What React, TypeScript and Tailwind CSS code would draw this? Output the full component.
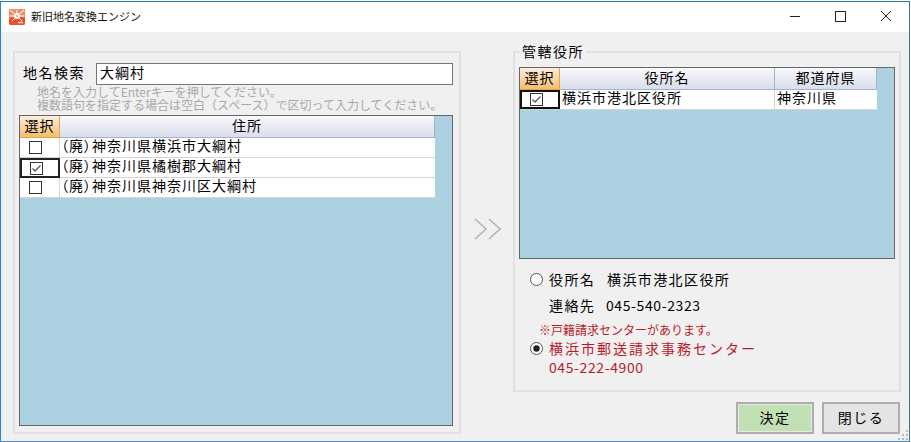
const font = { fontFamily: '"Noto Sans CJK JP", "Liberation Sans", sans-serif' };

const Check = ({ checked = false }: { checked?: boolean }) => (
  <svg width="13" height="13" viewBox="0 0 13 13" className="block">
    <rect x="0.5" y="0.5" width="12" height="12" fill="#fff" stroke="#333" />
    {checked && <path d="M2.5 6.5 L5 9 L10.5 3.5" fill="none" stroke="#555" strokeWidth="1.3" />}
  </svg>
);

const Radio = ({ checked = false }: { checked?: boolean }) => (
  <svg width="13" height="13" viewBox="0 0 13 13" className="block shrink-0">
    <circle cx="6.5" cy="6.5" r="6" fill="#fff" stroke="#555" />
    {checked && <circle cx="6.5" cy="6.5" r="3.2" fill="#222" />}
  </svg>
);

const HeadCell = ({ className, children }: { className: string; children: React.ReactNode }) => (
  <div
    className={`flex h-[22px] items-center justify-center border-r border-b border-[#a0b4cc] bg-gradient-to-b from-[#f8f9fc] to-[#d9deea] pb-[2px] text-[14px] tracking-[1px] text-black ${className}`}
  >
    {children}
  </div>
);

const SelectHead = () => (
  <div className="flex h-[22px] w-[40px] items-center justify-center border-r border-b border-[#f0a040] bg-gradient-to-b from-[#fbeedd] to-[#f3bd6c] pb-[2px] text-[14px] tracking-[1px] text-black">
    選択
  </div>
);

const AddressRow = ({ text, checked = false, selected = false }: { text: string; checked?: boolean; selected?: boolean }) => (
  <div className="flex h-[20px] border-b border-[#d4d4d4] bg-white">
    <div
      className={`flex w-[40px] items-center justify-center pr-[8px] ${selected ? "-mb-px border-2 border-[#222]" : "border-r border-[#d4d4d4]"}`}
    >
      <Check checked={checked} />
    </div>
    <div className="flex-1 pl-[1px] text-[14px] leading-[15px] tracking-[1px] text-black [font-feature-settings:'palt']">{text}</div>
  </div>
);

const WindowButtons = () => (
  <div className="flex items-center">
    <svg width="46" height="30" viewBox="0 0 46 30" className="block">
      <path d="M19 14.5 H29" stroke="#222" />
    </svg>
    <svg width="46" height="30" viewBox="0 0 46 30" className="block">
      <rect x="18.5" y="9.5" width="10" height="10" fill="none" stroke="#222" />
    </svg>
    <svg width="46" height="30" viewBox="0 0 46 30" className="block">
      <path d="M18 9 L28 19 M28 9 L18 19" stroke="#222" />
    </svg>
  </div>
);

const AppIcon = () => (
  <svg width="16" height="16" viewBox="0 0 16 16" className="block">
    <rect width="16" height="16" rx="1.5" fill="#e9502c" />
    <path d="M0 0 L16 0 L16 9 L8 7 L0 9 Z" fill="#f58a68" />
    <path d="M8 7 L1 1 M8 7 L15 1 M8 7 V1 M8 7 H1 M8 7 H15 M8 7 L3 12 M8 7 L13 12" stroke="#fff" strokeWidth="1" />
    <circle cx="8" cy="7" r="3" fill="#fff" />
    <circle cx="8" cy="7" r="1" fill="#f0a080" />
    <path d="M9 13.5 H14" stroke="#fbd5c8" strokeWidth="1.5" />
  </svg>
);

const ResizeGrip = () => (
  <svg width="12" height="12" viewBox="0 0 12 12" className="absolute right-0 bottom-0 block">
    <path d="M9 1h2v2H9z M5 5h2v2H5z M9 5h2v2H9z M1 9h2v2H1z M5 9h2v2H5z M9 9h2v2H9z" fill="#b8b8b8" />
  </svg>
);

export default function App() {
  return (
    <div style={font} className="h-[442px] w-[911px] bg-white pt-px pr-px">
      <div className="relative flex h-[441px] w-[910px] flex-col overflow-hidden border border-t-[#2f78b8] border-r-[#2f78b8] border-b-[#4a86c0] border-l-[#2a82d8] bg-[#f0f0f0]">
        <div className="flex h-[30px] shrink-0 items-center justify-between bg-white">
          <div className="flex items-center gap-[6px] pl-[8px]">
            <AppIcon />
            <span className="pb-[1px] text-[11px] text-[#111]">新旧地名変換エンジン</span>
          </div>
          <WindowButtons />
        </div>

        <div className="flex flex-1 pt-[19px] pl-[12px]">
          {/* left panel */}
          <div className="flex h-[383px] w-[448px] flex-col border-2 border-[#e0e0e0] pt-[9px] pr-[6px] pb-[6px] pl-[4px]">
            <div className="flex h-[23px] items-center">
              <span className="w-[77px] pb-[2px] pl-[4px] text-[14px] tracking-[1.5px] text-black">地名検索</span>
              <div className="flex h-[22px] flex-1 items-center border border-[#767676] bg-white pb-[2px] pl-[3px] text-[14px] tracking-[1px] text-black">
                大綱村
              </div>
            </div>
            <div className="pl-[18px] text-[12px] leading-[13px] whitespace-nowrap text-[#a8a8a8]">
              <div>地名を入力してEnterキーを押してください。</div>
              <div>複数語句を指定する場合は空白（スペース）で区切って入力してください。</div>
            </div>
            <div className="mt-[4px] flex-1 border border-[#666] bg-[#acd2e1]">
              <div className="w-[415px]">
                <div className="flex">
                  <SelectHead />
                  <HeadCell className="flex-1">住所</HeadCell>
                </div>
                <AddressRow text="（廃）神奈川県横浜市大綱村" />
                <AddressRow text="（廃）神奈川県橘樹郡大綱村" checked selected />
                <AddressRow text="（廃）神奈川県神奈川区大綱村" />
              </div>
            </div>
          </div>

          {/* arrows */}
          <div className="flex w-[52px] items-start justify-center pt-[167px]">
            <svg width="27" height="22" viewBox="0 0 27 22" className="block">
              <path d="M1 1 L12 11 L1 21 M15 1 L26 11 L15 21" fill="none" stroke="#b4b4b4" strokeWidth="1.6" />
            </svg>
          </div>

          {/* right column */}
          <div className="flex w-[388px] flex-col">
            <div className="relative flex h-[341px] flex-col border-2 border-[#e0e0e0] px-[4px] pt-[14px]">
              <span className="absolute -top-[10px] left-[5px] bg-[#f0f0f0] px-[2px] text-[14px] leading-[16px] tracking-[1.5px] text-black">
                管轄役所
              </span>
              <div className="h-[192px] shrink-0 border border-[#666] bg-[#acd2e1]">
                <div className="w-[357px]">
                  <div className="flex">
                    <SelectHead />
                    <HeadCell className="w-[215px]">役所名</HeadCell>
                    <HeadCell className="flex-1">都道府県</HeadCell>
                  </div>
                  <div className="flex h-[20px] border-b border-[#d4d4d4] bg-white text-[14px] leading-[15px] text-black">
                    <div className="flex w-[40px] items-center justify-center border-2 border-[#111] pr-[8px]">
                      <Check checked />
                    </div>
                    <div className="w-[215px] border-r border-[#d4d4d4] pl-[2px] tracking-[1px]">横浜市港北区役所</div>
                    <div className="flex-1 pl-[2px] tracking-[1px]">神奈川県</div>
                  </div>
                </div>
              </div>
              <div className="flex items-center gap-[6px] pt-[10px] pl-[11px] text-[14px] leading-[20px] tracking-[1.4px] text-black">
                <Radio />
                <span className="w-[52px]">役所名</span>
                <span>横浜市港北区役所</span>
              </div>
              <div className="pt-[6px] pl-[30px] text-[14px] leading-[20px] tracking-[1.4px] text-black">
                <span className="inline-block w-[57px]">連絡先</span>
                <span className="tracking-[0.6px]">045-540-2323</span>
              </div>
              <div className="pt-[7px] pl-[20px] text-[12px] leading-[15px] text-[#b81c2c]">※戸籍請求センターがあります。</div>
              <div className="flex items-center gap-[6px] pt-[1px] pl-[11px] text-[14px] leading-[20px] tracking-[2px] text-[#b81c2c]">
                <Radio checked />
                <span>横浜市郵送請求事務センター</span>
              </div>
              <div className="pl-[30px] text-[14px] leading-[18px] tracking-[0.6px] text-[#b81c2c]">045-222-4900</div>
            </div>
            <div className="flex justify-end gap-[8px] pt-[10px] pr-[1px]">
              <button className="h-[32px] w-[78px] border-[2px] border-[#adadad] bg-[#c1e0b4] pb-[2px] text-[14px] tracking-[1.5px] text-black shadow-[inset_0_0_0_1px_#e8e8e8]">
                決定
              </button>
              <button className="h-[32px] w-[78px] border-[2px] border-[#adadad] bg-[#e4e4e4] pb-[2px] text-[14px] tracking-[1.5px] text-black">
                閉じる
              </button>
            </div>
          </div>
        </div>
        <ResizeGrip />
      </div>
    </div>
  );
}
